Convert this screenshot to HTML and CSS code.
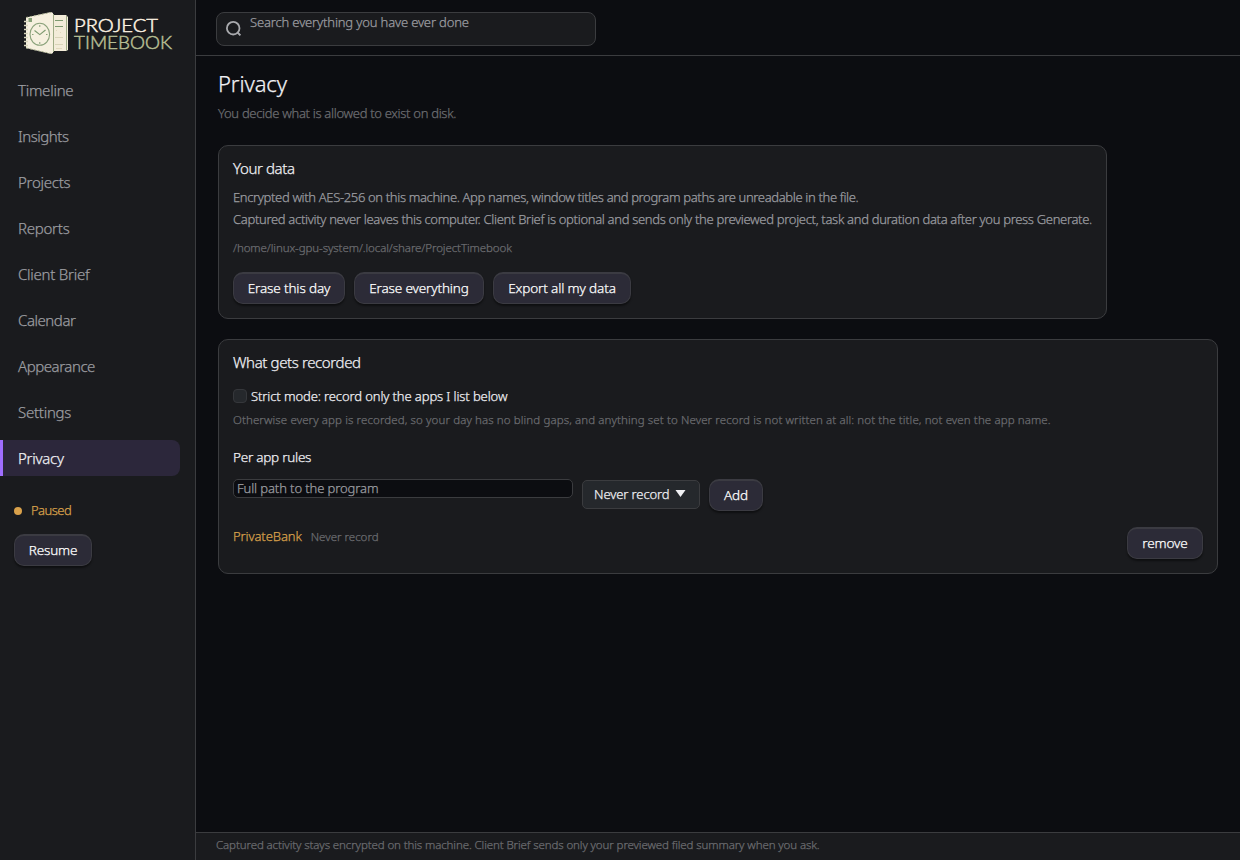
FILE: index.html
```
<!DOCTYPE html>
<html lang="en">

<head>
  <meta charset="UTF-8">
  <meta name="viewport" content="width=device-width, initial-scale=1.0">
  <title>Project Timebook - Privacy</title>
  <link rel="stylesheet" href="styles.css">
</head>

<body>
  <aside class="sidebar">
    <svg class="logo" width="156" height="48" viewBox="20 8 156 48">
      <!-- pages behind the cover -->
      <path d="M52 15H66L68 17V50L66 51H52Z" fill="#f3ecd9" />
      <path d="M66.5 16V50.5M53.5 14V52" stroke="#9fac86" stroke-width="1" />
      <path d="M55 20.5H63M55 26.5H63" stroke="#7e9a70" stroke-width="1" />
      <path d="M55 37.5H63M55 44.5H63" stroke="#d9d4b8" stroke-width="1" />
      <path d="M56 30.5H57M60 32.5H61M56 48.5H62" stroke="#e2d9bd" stroke-width="1" />
      <!-- cover -->
      <path d="M26 17.5L51 12L53 13V53L51 54L26 48Z" fill="#f6f0df" />
      <path d="M26 17.5L51 12.5M26 48L51 53.5" fill="none" stroke="#a9b08d" stroke-width="1" stroke-dasharray="2 2" />
      <path d="M24 21.5H28M24 25.5H28M24 29.5H28M24 33.5H28M24 37.5H28M24 41.5H28M24 45.5H28" stroke="#d8d5bc" stroke-width="1.4" />
      <rect x="28.5" y="18" width="3.5" height="4" fill="#86a077" />
      <ellipse cx="39.8" cy="34.3" rx="9.8" ry="11" fill="none" stroke="#8ba27b" stroke-width="1.1" />
      <path d="M34.5 30.5L39.8 34.6L45.5 30" fill="none" stroke="#7e9a70" stroke-width="1.2" />
      <path d="M39.8 25V27M39.8 42V44M32 34.5H33.5M46 34.5H47.5" stroke="#8ba27b" stroke-width="1" />
      <text class="logo-text project" x="74" y="32" textLength="84" lengthAdjust="spacingAndGlyphs">PROJECT</text>
      <text class="logo-text timebook" x="74" y="49" textLength="98" lengthAdjust="spacingAndGlyphs">TIMEBOOK</text>
    </svg>
    <nav class="nav">
      <a class="nav-item">Timeline</a>
      <a class="nav-item tight">Insights</a>
      <a class="nav-item">Projects</a>
      <a class="nav-item">Reports</a>
      <a class="nav-item">Client Brief</a>
      <a class="nav-item tight">Calendar</a>
      <a class="nav-item tight">Appearance</a>
      <a class="nav-item">Settings</a>
      <a class="nav-item active">Privacy</a>
    </nav>
    <div class="status"><span class="dot"></span><span class="state">Paused</span></div>
    <button class="btn resume">Resume</button>
  </aside>

  <div class="main">
    <header class="topbar">
      <div class="search">
        <svg width="18" height="18" viewBox="0 0 18 18">
          <circle cx="8.2" cy="8.2" r="6.3" fill="none" stroke="#a9aaae" stroke-width="1.8" />
          <path d="M12.4 12.4L15.4 15.4" stroke="#a9aaae" stroke-width="2" />
        </svg>
        <input type="text" placeholder="Search everything you have ever done">
      </div>
    </header>

    <main class="content">
      <h1>Privacy</h1>
      <p class="subtitle">You decide what is allowed to exist on disk.</p>

      <section class="card data-card">
        <h2>Your data</h2>
        <p class="text">Encrypted with AES-256 on this machine. App names, window titles and program paths are unreadable in the file.</p>
        <p class="text network">Captured activity never leaves this computer. Client Brief is optional and sends only the previewed project, task and duration data after you press Generate.</p>
        <p class="path">/home/linux-gpu-system/.local/share/ProjectTimebook</p>
        <div class="actions">
          <button class="btn erase-day">Erase this day</button>
          <button class="btn erase-all">Erase everything</button>
          <button class="btn export">Export all my data</button>
        </div>
      </section>

      <section class="card rules-card">
        <h2>What gets recorded</h2>
        <label class="check"><span class="box"></span>Strict mode: record only the apps I list below</label>
        <p class="hint">Otherwise every app is recorded, so your day has no blind gaps, and anything set to Never record is not written at all: not the title, not even the app name.</p>
        <h3>Per app rules</h3>
        <div class="rule-form">
          <input class="program" type="text" placeholder="Full path to the program">
          <div class="select">Never record
            <svg width="11" height="7" viewBox="0 0 11 7"><path d="M0.5 0H10.5L5.5 7Z" fill="#f0f0f3" /></svg>
          </div>
          <button class="btn add">Add</button>
        </div>
        <div class="rule">
          <span class="app">PrivateBank</span>
          <span class="mode">Never record</span>
          <button class="btn remove">remove</button>
        </div>
      </section>
    </main>

    <footer class="footer">Captured activity stays encrypted on this machine. Client Brief sends only your previewed filed summary when you ask.</footer>
  </div>
</body>

</html>
```
FILE: styles.css
```
* {
  box-sizing: border-box;
}

body {
  display: flex;
  height: 100vh;
  margin: 0;
  overflow: hidden;
  background: #0c0d11;
  color: #f0f0f4;
  font-family: "Noto Sans", sans-serif;
  font-size: 13px;
  font-weight: 300;
  white-space: nowrap;
  -webkit-text-stroke: 0.25px currentColor;
}

h1,
h2,
h3,
p {
  margin: 0;
  font-weight: inherit;
}

button,
input {
  font: inherit;
  letter-spacing: inherit;
}

.sidebar {
  width: 196px;
  flex-shrink: 0;
  padding-top: 8px;
  background: #1a1b1e;
  border-right: 1px solid #3b3c3f;
}

.logo {
  display: block;
  margin: 0 0 16px 20px;
}

.logo-text {
  font-family: Lato, sans-serif;
  font-size: 18px;
  font-weight: 300;
  stroke-width: 0.5px;
}

.project {
  fill: #fbf1e0;
  stroke: #fbf1e0;
}

.timebook {
  fill: #b5bd92;
  stroke: #b5bd92;
}

.nav {
  display: flex;
  flex-direction: column;
  gap: 10px;
}

.nav-item {
  width: 180px;
  height: 36px;
  padding-left: 18px;
  border-radius: 8px;
  color: #9c9da1;
  font-size: 15px;
  line-height: 36px;
  letter-spacing: -0.25px;
}

.nav-item.tight {
  letter-spacing: -0.45px;
}

.nav-item.active {
  padding-left: 15px;
  border-left: 3px solid #a06eff;
  border-radius: 0 8px 8px 0;
  background: #2c273b;
  color: #f0f0f4;
}

.status {
  display: flex;
  align-items: center;
  gap: 9px;
  height: 20px;
  margin: 25px 0 13px 14px;
  color: #d9a14b;
  letter-spacing: -0.55px;
}

.state {
  padding-bottom: 2px;
  line-height: 18px;
}

.dot {
  width: 8px;
  height: 8px;
  border-radius: 50%;
  background: #d9a14b;
}

.btn {
  height: 32px;
  padding: 0 0 2px;
  border: 1px solid #3b3b42;
  border-top-width: 2px;
  border-radius: 10px;
  background: #2c2b37;
  box-shadow: 0 2px 2px rgba(0, 0, 0, 0.45);
  color: #fff;
  font-size: 13.5px;
  line-height: 26px;
  letter-spacing: -0.13px;
}

.resume {
  width: 78px;
  margin-left: 14px;
}

.main {
  display: flex;
  flex: 1;
  flex-direction: column;
}

.topbar {
  height: 56px;
  padding: 12px 20px;
  border-bottom: 1px solid #3b3c3f;
}

.search {
  display: flex;
  gap: 7px;
  width: 380px;
  height: 34px;
  padding: 0 8px;
  border: 1px solid #3b3c3f;
  border-radius: 8px;
  background: #1a1b1e;
}

.search svg {
  margin-top: 7px;
}

.search input {
  flex: 1;
  height: 18px;
  padding: 0;
  border: 0;
  outline: 0;
  background: none;
  color: #f0f0f4;
  letter-spacing: -0.15px;
}

input::placeholder {
  color: #9c9da1;
}

.content {
  flex: 1;
  padding: 13px 22px;
}

h1 {
  font-size: 22px;
  line-height: 28px;
  letter-spacing: -0.1px;
}

.subtitle {
  margin-top: 6px;
  color: #6c6d71;
  line-height: 20px;
  letter-spacing: -0.31px;
}

.card {
  padding: 14px;
  border: 1px solid #3b3c3f;
  border-radius: 10px;
  background: #1a1b1e;
}

.data-card {
  width: 889px;
  height: 174px;
  margin-top: 22px;
}

.rules-card {
  width: 1000px;
  height: 235px;
  margin-top: 20px;
}

h2 {
  font-size: 15px;
  line-height: 16px;
  letter-spacing: -0.38px;
}

.text {
  color: #9c9da1;
  line-height: 22px;
  letter-spacing: -0.35px;
}

.text.network {
  letter-spacing: -0.317px;
}

h2 + .text {
  margin-top: 10px;
}

.path,
.hint {
  color: #6c6d71;
  font-size: 11.5px;
  line-height: 16px;
}

.path {
  margin-top: 10px;
  letter-spacing: -0.09px;
}

.actions {
  display: flex;
  gap: 9px;
  margin-top: 16px;
}

.erase-day {
  width: 112px;
}

.erase-all {
  width: 130px;
}

.export {
  width: 138px;
}

.check {
  display: flex;
  align-items: center;
  gap: 4px;
  height: 16px;
  margin-top: 18px;
  letter-spacing: -0.11px;
}

.box {
  width: 14px;
  height: 14px;
  border: 1px solid #35373b;
  border-radius: 4px;
  background: #25282c;
}

.hint {
  margin-top: 8px;
  letter-spacing: 0.107px;
}

h3 {
  margin-top: 21px;
  font-size: 13.5px;
  line-height: 16px;
  letter-spacing: -0.25px;
}

.rule-form {
  display: flex;
  align-items: flex-start;
  gap: 9px;
  margin-top: 14px;
}

.program {
  width: 340px;
  height: 19px;
  padding: 0 3px 2px;
  border: 1px solid #3b3c3f;
  border-radius: 5px;
  background: #0c0d11;
  color: #f0f0f4;
  letter-spacing: -0.1px;
}

.select {
  display: flex;
  align-items: center;
  justify-content: space-between;
  width: 118px;
  height: 29px;
  margin-top: 1px;
  padding: 0 13px 2px 11px;
  border: 1px solid #3b3c3f;
  border-radius: 5px;
  background: #25282c;
  letter-spacing: -0.1px;
}

.add {
  width: 54px;
}

.rule {
  display: flex;
  gap: 9px;
  margin-top: 16px;
  line-height: 19px;
}

.app {
  color: #d9a14b;
  letter-spacing: -0.1px;
}

.mode {
  color: #6c6d71;
  font-size: 11.5px;
  line-height: 20px;
}

.remove {
  width: 76px;
  margin-left: auto;
}

.footer {
  height: 28px;
  padding-left: 20px;
  border-top: 1px solid #3b3c3f;
  background: #1a1b1e;
  color: #6c6d71;
  font-size: 11.5px;
  line-height: 24px;
  letter-spacing: -0.105px;
}
```
